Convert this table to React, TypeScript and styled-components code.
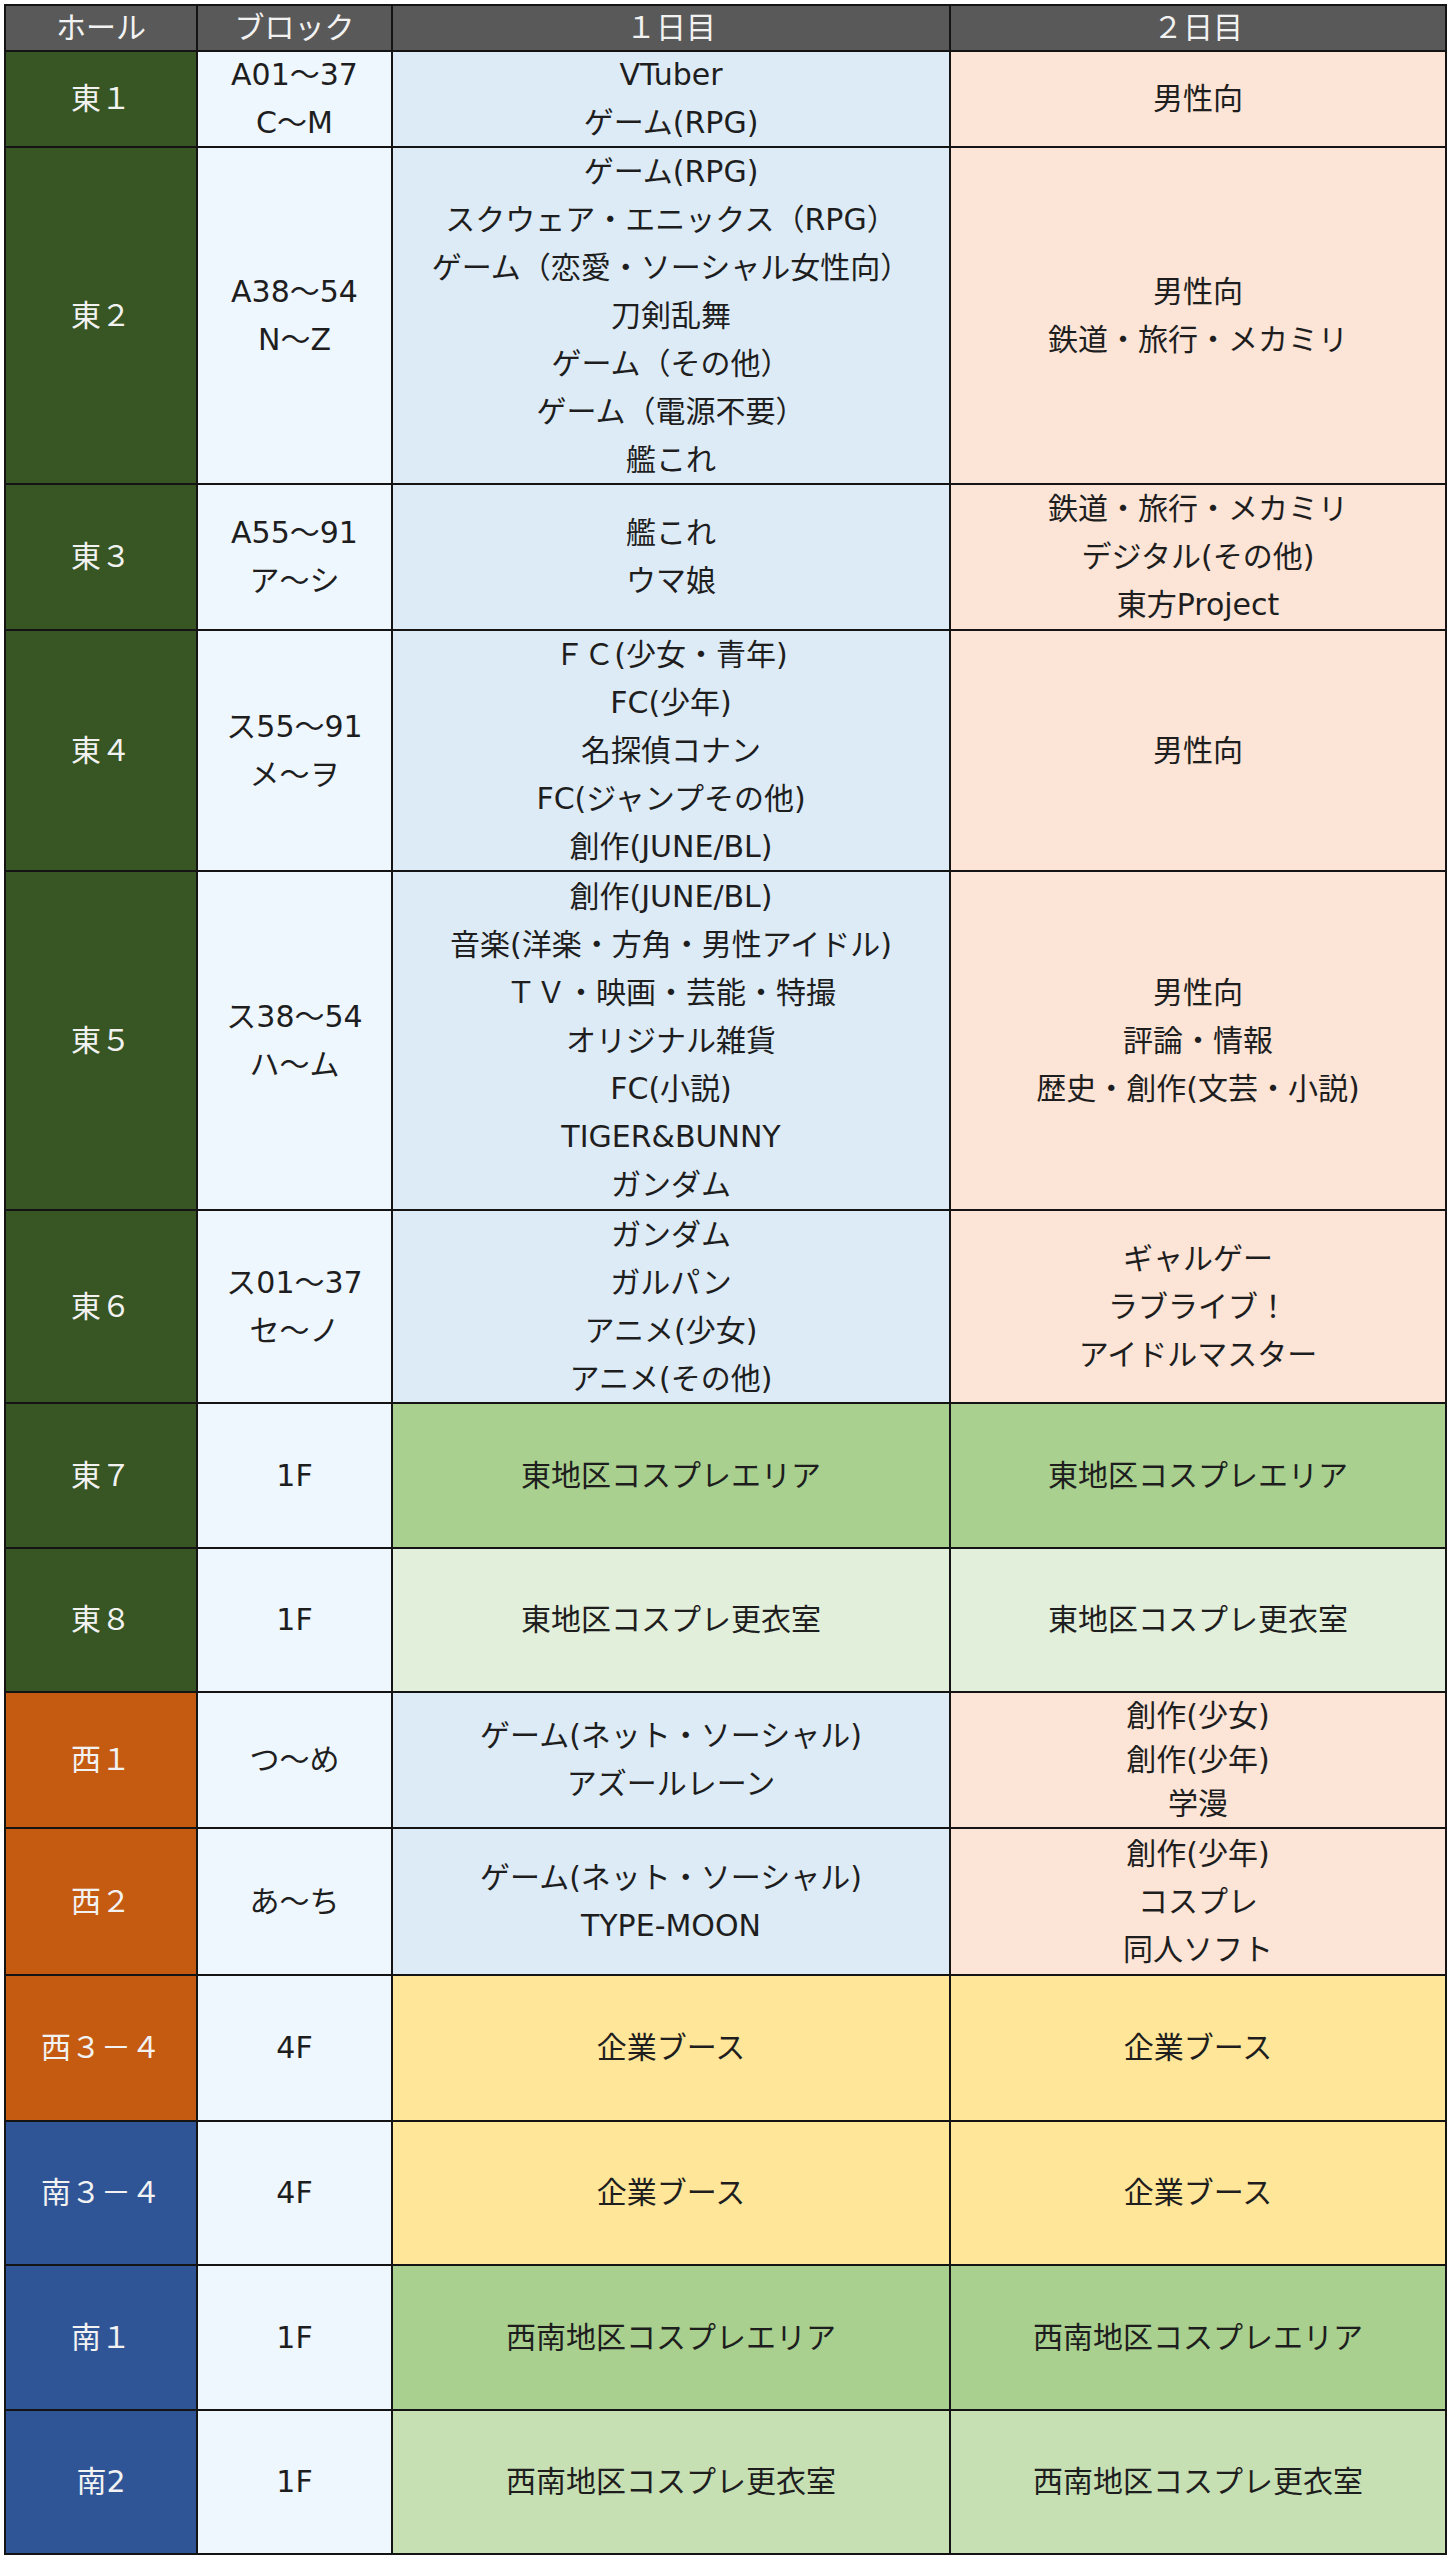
import React from "react";
import styled, { createGlobalStyle } from "styled-components";

const GlobalStyle = createGlobalStyle`
  html, body {
    margin: 0;
    padding: 0;
    background: #ffffff;
  }
  body {
    font-family: "DejaVu Sans", "Noto Sans CJK JP", sans-serif;
  }
`;

const COLS = "190px 193px 556px 494px";

const Sheet = styled.div`
  display: flex;
  flex-direction: column;
  gap: 2px;
  width: fit-content;
  margin: 4px 0 0 4px;
  padding: 2px;
  background: #141414;
`;

const Row = styled.div<{ $h: number }>`
  display: grid;
  grid-template-columns: ${COLS};
  grid-template-rows: minmax(0, 1fr);
  gap: 2px;
  height: ${(p) => p.$h}px;
  flex: none;
`;

const Cell = styled.div<{ $bg: string; $fg?: string; $lh?: number }>`
  display: flex;
  flex-direction: column;
  align-items: center;
  justify-content: center;
  min-height: 0;
  overflow: hidden;
  background: ${(p) => p.$bg};
  color: ${(p) => p.$fg ?? "#1e1e1e"};
  font-size: 30px;
  line-height: ${(p) => p.$lh ?? 48}px;
  text-align: center;
  white-space: nowrap;
`;

const Line = styled.span`
  display: block;
  flex: none;
`;

const C = {
  head: "#595959",
  east: "#375623",
  west: "#c55a11",
  south: "#2f5597",
  block: "#eef6fe",
  day1: "#ddebf7",
  day2: "#fce4d6",
  cos: "#a9d08e",
  coseLight: "#e2efda",
  cosSouth: "#c6e0b4",
  booth: "#ffe699",
  light: "#f2f2f2",
};

type CellData = { lines: string[]; bg: string; lh?: number };
type RowData = {
  hall: string;
  hallBg: string;
  block: string[];
  day1: CellData;
  day2: CellData;
  h: number;
};

const d1 = (...lines: string[]): CellData => ({ lines, bg: C.day1 });
const d2 = (...lines: string[]): CellData => ({ lines, bg: C.day2 });
const fill = (bg: string, text: string): CellData => ({ lines: [text], bg });

const rows: RowData[] = [
  {
    hall: "東１",
    hallBg: C.east,
    block: ["A01～37", "C～M"],
    day1: d1("VTuber", "ゲーム(RPG)"),
    day2: d2("男性向"),
    h: 94,
  },
  {
    hall: "東２",
    hallBg: C.east,
    block: ["A38～54", "N～Z"],
    day1: d1(
      "ゲーム(RPG)",
      "スクウェア・エニックス（RPG）",
      "ゲーム（恋愛・ソーシャル女性向）",
      "刀剣乱舞",
      "ゲーム（その他）",
      "ゲーム（電源不要）",
      "艦これ"
    ),
    day2: d2("男性向", "鉄道・旅行・メカミリ"),
    h: 335,
  },
  {
    hall: "東３",
    hallBg: C.east,
    block: ["A55～91", "ア～シ"],
    day1: d1("艦これ", "ウマ娘"),
    day2: d2("鉄道・旅行・メカミリ", "デジタル(その他)", "東方Project"),
    h: 144,
  },
  {
    hall: "東４",
    hallBg: C.east,
    block: ["ス55～91", "メ～ヲ"],
    day1: d1(
      "ＦＣ(少女・青年)",
      "FC(少年)",
      "名探偵コナン",
      "FC(ジャンプその他)",
      "創作(JUNE/BL)"
    ),
    day2: d2("男性向"),
    h: 239,
  },
  {
    hall: "東５",
    hallBg: C.east,
    block: ["ス38～54", "ハ～ム"],
    day1: d1(
      "創作(JUNE/BL)",
      "音楽(洋楽・方角・男性アイドル)",
      "ＴＶ・映画・芸能・特撮",
      "オリジナル雑貨",
      "FC(小説)",
      "TIGER&BUNNY",
      "ガンダム"
    ),
    day2: d2("男性向", "評論・情報", "歴史・創作(文芸・小説)"),
    h: 337,
  },
  {
    hall: "東６",
    hallBg: C.east,
    block: ["ス01～37", "セ～ノ"],
    day1: d1("ガンダム", "ガルパン", "アニメ(少女)", "アニメ(その他)"),
    day2: d2("ギャルゲー", "ラブライブ！", "アイドルマスター"),
    h: 191,
  },
  {
    hall: "東７",
    hallBg: C.east,
    block: ["1F"],
    day1: fill(C.cos, "東地区コスプレエリア"),
    day2: fill(C.cos, "東地区コスプレエリア"),
    h: 143,
  },
  {
    hall: "東８",
    hallBg: C.east,
    block: ["1F"],
    day1: fill(C.coseLight, "東地区コスプレ更衣室"),
    day2: fill(C.coseLight, "東地区コスプレ更衣室"),
    h: 142,
  },
  {
    hall: "西１",
    hallBg: C.west,
    block: ["つ～め"],
    day1: d1("ゲーム(ネット・ソーシャル)", "アズールレーン"),
    day2: { ...d2("創作(少女)", "創作(少年)", "学漫"), lh: 44 },
    h: 134,
  },
  {
    hall: "西２",
    hallBg: C.west,
    block: ["あ～ち"],
    day1: d1("ゲーム(ネット・ソーシャル)", "TYPE-MOON"),
    day2: d2("創作(少年)", "コスプレ", "同人ソフト"),
    h: 145,
  },
  {
    hall: "西３－４",
    hallBg: C.west,
    block: ["4F"],
    day1: fill(C.booth, "企業ブース"),
    day2: fill(C.booth, "企業ブース"),
    h: 144,
  },
  {
    hall: "南３－４",
    hallBg: C.south,
    block: ["4F"],
    day1: fill(C.booth, "企業ブース"),
    day2: fill(C.booth, "企業ブース"),
    h: 142,
  },
  {
    hall: "南１",
    hallBg: C.south,
    block: ["1F"],
    day1: fill(C.cos, "西南地区コスプレエリア"),
    day2: fill(C.cos, "西南地区コスプレエリア"),
    h: 143,
  },
  {
    hall: "南2",
    hallBg: C.south,
    block: ["1F"],
    day1: fill(C.cosSouth, "西南地区コスプレ更衣室"),
    day2: fill(C.cosSouth, "西南地区コスプレ更衣室"),
    h: 142,
  },
];

const Lines = ({ lines }: { lines: string[] }) => (
  <>
    {lines.map((l, i) => (
      <Line key={i}>{l}</Line>
    ))}
  </>
);

export default function App() {
  return (
    <>
      <GlobalStyle />
      <Sheet>
        <Row $h={44}>
          {["ホール", "ブロック", "１日目", "２日目"].map((t) => (
            <Cell key={t} $bg={C.head} $fg={C.light}>
              {t}
            </Cell>
          ))}
        </Row>
        {rows.map((r) => (
          <Row key={r.hall} $h={r.h}>
            <Cell $bg={r.hallBg} $fg={C.light}>
              {r.hall}
            </Cell>
            <Cell $bg={C.block}>
              <Lines lines={r.block} />
            </Cell>
            <Cell $bg={r.day1.bg} $lh={r.day1.lh}>
              <Lines lines={r.day1.lines} />
            </Cell>
            <Cell $bg={r.day2.bg} $lh={r.day2.lh}>
              <Lines lines={r.day2.lines} />
            </Cell>
          </Row>
        ))}
      </Sheet>
    </>
  );
}
